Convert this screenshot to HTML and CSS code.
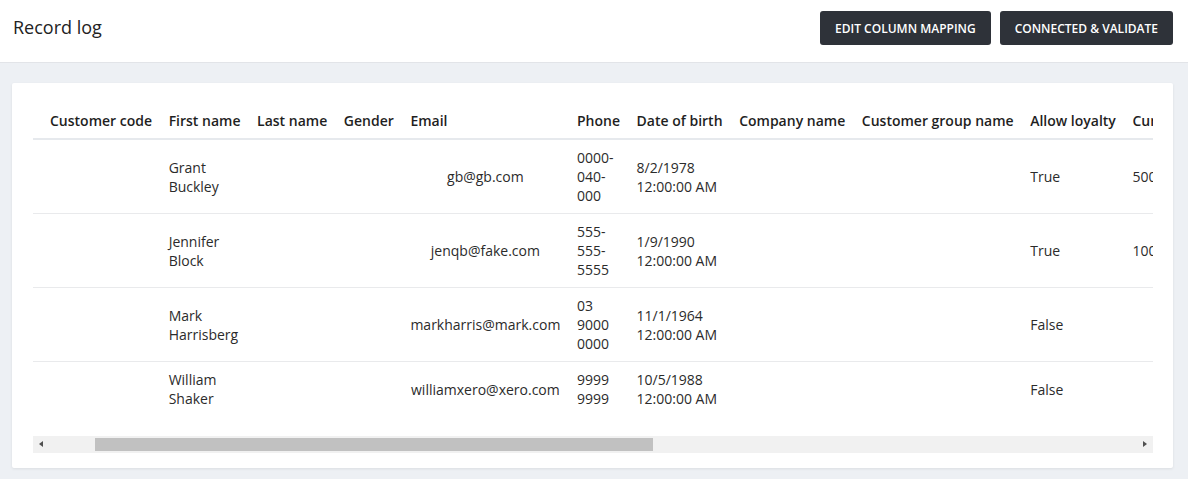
FILE: index.html
```html
<!DOCTYPE html>
<html>
<head>
<meta charset="utf-8">
<title>Record log</title>
<link rel="stylesheet" href="styles.css">
</head>
<body>
<header class="topbar">
  <h1 class="title">Record log</h1>
  <div class="actions">
    <button class="btn">EDIT COLUMN MAPPING</button>
    <button class="btn">CONNECTED &amp; VALIDATE</button>
  </div>
</header>
<main class="main">
  <section class="card">
    <div class="table-wrap">
      <table class="grid">
        <thead>
          <tr>
            <th>Customer code</th>
            <th>First name</th>
            <th>Last name</th>
            <th>Gender</th>
            <th class="email">Email</th>
            <th>Phone</th>
            <th>Date of birth</th>
            <th>Company name</th>
            <th>Customer group name</th>
            <th>Allow loyalty</th>
            <th>Current loyalty balance</th>
            <th>Street address</th>
            <th>Suburb</th>
            <th>City</th>
            <th>Postcode</th>
            <th>Country</th>
          </tr>
        </thead>
        <tbody>
          <tr>
            <td></td><td>Grant Buckley</td><td></td><td></td>
            <td class="email">gb@gb.com</td>
            <td>0000-040-000</td>
            <td>8/2/1978 12:00:00 AM</td><td></td><td></td>
            <td>True</td><td>500.00</td><td></td><td></td><td></td><td></td><td></td>
          </tr>
          <tr>
            <td></td><td>Jennifer Block</td><td></td><td></td>
            <td class="email">jenqb@fake.com</td>
            <td>555-555-5555</td>
            <td>1/9/1990 12:00:00 AM</td><td></td><td></td>
            <td>True</td><td>100.00</td><td></td><td></td><td></td><td></td><td></td>
          </tr>
          <tr>
            <td></td><td>Mark Harrisberg</td><td></td><td></td>
            <td class="email">markharris@mark.com</td>
            <td>03 9000 0000</td>
            <td>11/1/1964 12:00:00 AM</td><td></td><td></td>
            <td>False</td><td></td><td></td><td></td><td></td><td></td><td></td>
          </tr>
          <tr>
            <td></td><td>William Shaker</td><td></td><td></td>
            <td class="email">williamxero@xero.com</td>
            <td>9999 9999</td>
            <td>10/5/1988 12:00:00 AM</td><td></td><td></td>
            <td>False</td><td></td><td></td><td></td><td></td><td></td><td></td>
          </tr>
        </tbody>
      </table>
    </div>
    <div class="hscroll">
      <span class="arrow arrow-left"></span>
      <div class="track"><div class="thumb"></div></div>
      <span class="arrow arrow-right"></span>
    </div>
  </section>
</main>
</body>
</html>
```
FILE: styles.css
```css
html, body {
  margin: 0;
  padding: 0;
}
body {
  font-family: "Open Sans", "Noto Sans", sans-serif;
  color: #222;
  background: #edf0f4;
  width: 1188px;
  height: 479px;
  overflow: hidden;
}
.topbar {
  height: 62px;
  background: #fff;
  border-bottom: 1px solid #e2e4e8;
  display: flex;
  align-items: center;
  justify-content: space-between;
  padding: 0 15px 0 13px;
}
.title {
  margin: 0;
  font-size: 18px;
  font-weight: 400;
  color: #222;
  position: relative;
  top: -4px;
}
.actions {
  display: flex;
  gap: 9px;
  align-self: flex-start;
  margin-top: 11px;
}
.btn {
  font-family: "Open Sans", "Noto Sans", sans-serif;
  font-size: 12px;
  font-weight: 600;
  color: #fff;
  background: #2e3239;
  border: none;
  border-radius: 3px;
  height: 34px;
  padding: 0 15px;
  cursor: pointer;
}
.main {
  padding: 20px 15px 0 12px;
}
.card {
  background: #fff;
  border-radius: 2px;
  box-shadow: 0 1px 3px rgba(0, 0, 0, 0.08);
  padding: 20px 20px 15px 21px;
  height: 350px;
}
.table-wrap {
  overflow: hidden;
  width: 1120px;
  padding-bottom: 20px;
}
.grid {
  border-collapse: collapse;
  font-size: 14px;
}
.grid th {
  text-align: left;
  font-weight: 600;
  white-space: nowrap;
  padding: 8px 8.6px 8px 8px;
  border-bottom: 2px solid #e6e9ed;
  color: #1f1f1f;
}
.grid td {
  padding: 8px 8.6px 8px 8px;
  vertical-align: middle;
  border-bottom: 1px solid #e9eaec;
  color: #2b2b2b;
}
.grid tbody tr:last-child td {
  border-bottom: none;
}
.grid th:first-child,
.grid td:first-child {
  padding-left: 17px;
}
.grid td.email {
  text-align: center;
}
.hscroll {
  display: flex;
  align-items: center;
  width: 1120px;
  height: 17px;
  background: #f1f1f1;
}
.arrow {
  width: 16px;
  height: 17px;
  position: relative;
  flex: none;
}
.arrow::after {
  content: "";
  position: absolute;
  top: 5px;
  width: 0;
  height: 0;
  border-top: 3.5px solid transparent;
  border-bottom: 3.5px solid transparent;
}
.arrow-left::after {
  left: 6px;
  border-right: 4px solid #505050;
}
.arrow-right::after {
  left: 6px;
  border-left: 4px solid #505050;
}
.track {
  flex: 1;
  height: 17px;
  display: flex;
  align-items: center;
}
.thumb {
  margin-left: 46px;
  width: 558px;
  height: 13px;
  background: #c1c1c1;
}
```
